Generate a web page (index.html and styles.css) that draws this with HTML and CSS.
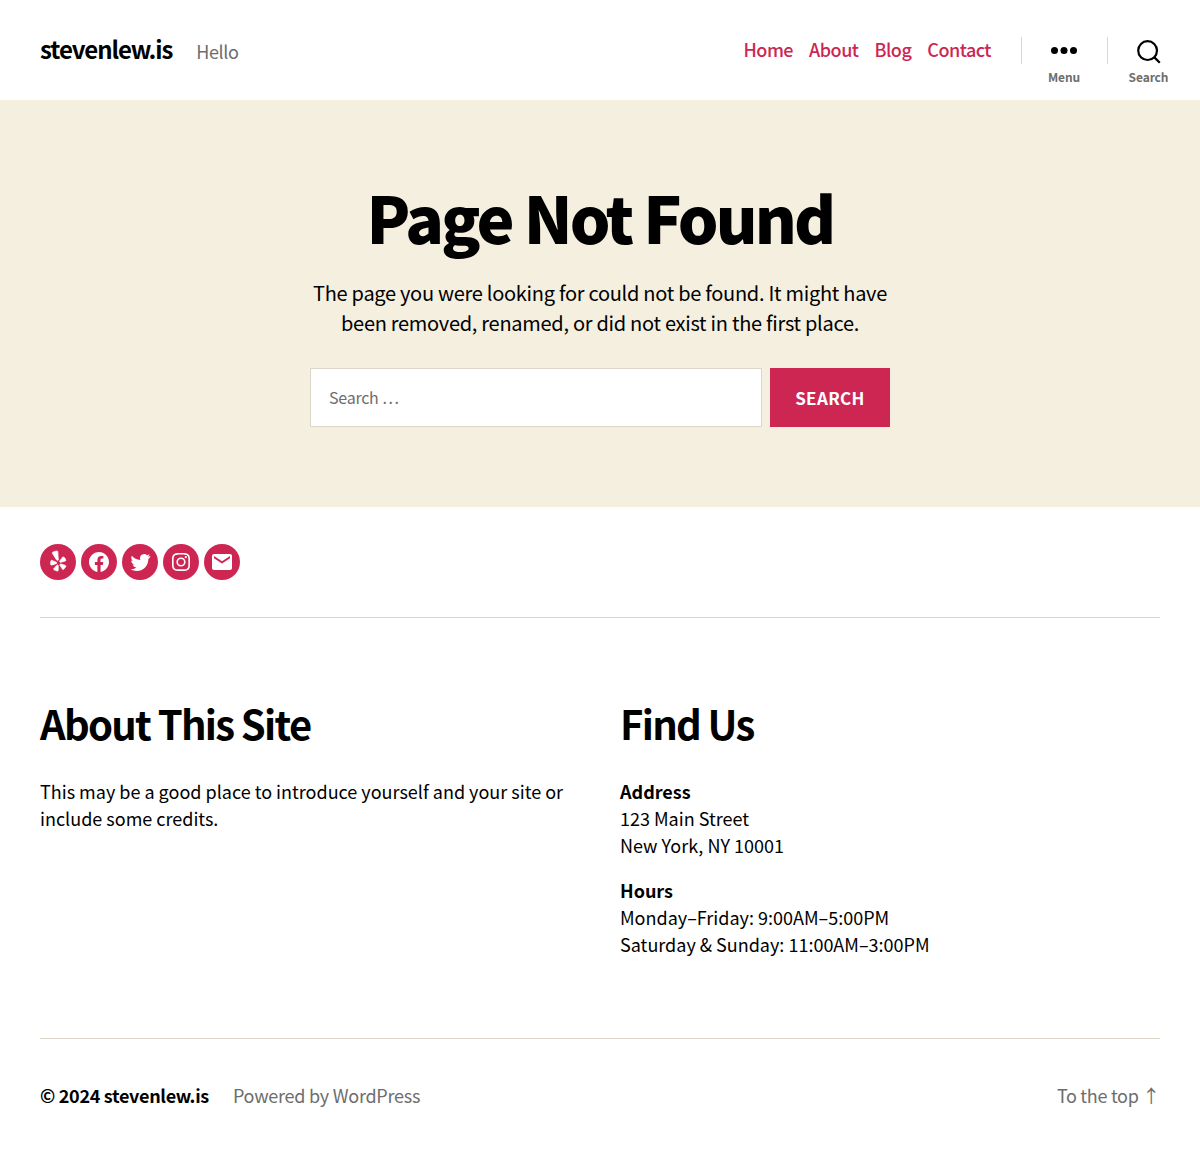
FILE: index.html
```html
<!DOCTYPE html>
<html>
<head>
<title>Page Not Found</title>
<link rel="stylesheet" href="styles.css">
</head>
<body>
<header class="site-header">
  <div class="branding">
    <div class="site-title">stevenlew.is</div>
    <div class="site-desc">Hello</div>
  </div>
  <div class="header-right">
    <nav class="main-nav">
      <a href="#">Home</a>
      <a href="#">About</a>
      <a href="#">Blog</a>
      <a href="#">Contact</a>
    </nav>
    <div class="toggle toggle-menu">
      <svg width="26" height="7" viewBox="0 0 26 7"><circle cx="3.5" cy="3.5" r="3.5"/><circle cx="13" cy="3.5" r="3.5"/><circle cx="22.5" cy="3.5" r="3.5"/></svg>
      <span>Menu</span>
    </div>
    <div class="toggle toggle-search">
      <svg width="24" height="24" viewBox="0 0 24 24"><circle cx="10.6" cy="10.6" r="9.4" fill="none" stroke="#000" stroke-width="2.2"/><path d="M17.4 17.4l5.4 5.4" stroke="#000" stroke-width="2.2" fill="none"/></svg>
      <span>Search</span>
    </div>
  </div>
</header>

<section class="hero">
  <h1>Page Not Found</h1>
  <p>The page you were looking for could not be found. It might have been removed, renamed, or did not exist in the first place.</p>
  <form class="search-form">
    <input type="text" placeholder="Search …">
    <button type="button">Search</button>
  </form>
</section>

<footer class="footer">
  <div class="social">
    <a href="#"><svg class="icon-yelp" viewBox="0 1 24 24" width="24" height="24"><path d="M12.271 16.718v1.417q-.011 3.257-.067 3.4a.707.707 0 0 1-.569.446 4.637 4.637 0 0 1-2.024-.424A4.609 4.609 0 0 1 7.8 20.565a.844.844 0 0 1-.19-.4.692.692 0 0 1 .044-.29 3.181 3.181 0 0 1 .379-.524q.335-.412 2.019-2.409.011 0 .669-.781a.757.757 0 0 1 .44-.274.965.965 0 0 1 .552.039.945.945 0 0 1 .418.324.732.732 0 0 1 .139.468zm-1.662-2.8a.783.783 0 0 1-.58.781l-1.339.435q-3.067.981-3.257.981a.711.711 0 0 1-.6-.4 2.636 2.636 0 0 1-.19-.836 9.134 9.134 0 0 1 .011-1.857 3.559 3.559 0 0 1 .335-1.389.659.659 0 0 1 .625-.357 22.629 22.629 0 0 1 2.253.859q.781.324 1.283.524l.937.379a.771.771 0 0 1 .4.34.982.982 0 0 1 .122.74zm9.213 3.313a4.467 4.467 0 0 1-1.021 1.8 4.559 4.559 0 0 1-1.512 1.417.671.671 0 0 1-.7-.078q-.156-.112-2.052-3.2l-.524-.859a.761.761 0 0 1-.128-.513.957.957 0 0 1 .217-.513.774.774 0 0 1 .926-.29q.011.011 1.327.446 2.264.736 2.7.887a2.082 2.082 0 0 1 .524.229.673.673 0 0 1 .243.674zm-7.5-7.049q.056 1.137-.6 1.361-.647.19-1.272-.792L6.237 4.08a.7.7 0 0 1 .212-.691 5.788 5.788 0 0 1 2.314-1 5.928 5.928 0 0 1 2.5-.352.681.681 0 0 1 .547.5q.034.2.245 3.407t.267 4.638zm7.384 1.2a.679.679 0 0 1-.29.658q-.167.112-3.67.959-.747.167-1.015.257l.011-.022a.769.769 0 0 1-.513-.044.914.914 0 0 1-.413-.357.786.786 0 0 1 0-.971q.011-.011.836-1.137 1.394-1.908 1.673-2.275a2.423 2.423 0 0 1 .379-.435.7.7 0 0 1 .737-.034 4.56 4.56 0 0 1 1.551 1.166 4.633 4.633 0 0 1 .714 2.235z"/></svg></a>
    <a href="#"><svg viewBox="0 0 24 24" width="24" height="24"><path d="M12 2C6.5 2 2 6.5 2 12c0 5 3.7 9.1 8.4 9.9v-7H7.9V12h2.5V9.8c0-2.5 1.5-3.9 3.8-3.9 1.1 0 2.2.2 2.2.2v2.5h-1.3c-1.2 0-1.6.8-1.6 1.6V12h2.8l-.4 2.9h-2.3v7C18.3 21.1 22 17 22 12c0-5.5-4.5-10-10-10z"/></svg></a>
    <a href="#"><svg viewBox="0 0 24 24" width="24" height="24"><path d="M22.23 5.92c-.73.33-1.51.55-2.33.65.84-.5 1.48-1.3 1.78-2.25-.78.47-1.65.8-2.58.99A4.07 4.07 0 0 0 12.17 9c0 .32.04.63.1.93-3.38-.17-6.38-1.79-8.39-4.25-.35.6-.55 1.3-.55 2.05 0 1.41.72 2.66 1.81 3.39-.67-.02-1.3-.2-1.84-.51v.05c0 1.97 1.4 3.62 3.26 3.99-.34.09-.7.14-1.07.14-.26 0-.52-.03-.77-.07.52 1.62 2.02 2.8 3.8 2.83a8.16 8.16 0 0 1-6.02 1.68 11.5 11.5 0 0 0 6.24 1.83c7.49 0 11.58-6.2 11.58-11.58l-.01-.53c.8-.57 1.48-1.29 2.02-2.1z"/></svg></a>
    <a href="#"><svg viewBox="0 0 24 24" width="24" height="24"><path d="M12 4.62c2.4 0 2.69.01 3.64.05.88.04 1.35.19 1.67.31.42.16.72.36 1.03.67.31.31.51.61.67 1.03.12.32.27.79.31 1.67.04.95.05 1.24.05 3.64s-.01 2.69-.05 3.64c-.04.88-.19 1.35-.31 1.67-.16.42-.36.72-.67 1.03-.31.31-.61.51-1.03.67-.32.12-.79.27-1.67.31-.95.04-1.24.05-3.64.05s-2.69-.01-3.64-.05c-.88-.04-1.35-.19-1.67-.31a2.8 2.8 0 0 1-1.03-.67 2.8 2.8 0 0 1-.67-1.03c-.12-.32-.27-.79-.31-1.67-.04-.95-.05-1.24-.05-3.64s.01-2.69.05-3.64c.04-.88.19-1.35.31-1.67.16-.42.36-.72.67-1.03.31-.31.61-.51 1.03-.67.32-.12.79-.27 1.67-.31.95-.04 1.24-.05 3.64-.05M12 3c-2.44 0-2.75.01-3.71.05-.96.05-1.61.2-2.18.42-.59.23-1.09.54-1.59 1.04-.5.5-.81 1-1.04 1.59-.22.57-.37 1.22-.42 2.18C3.01 9.25 3 9.56 3 12s.01 2.75.05 3.71c.05.96.2 1.61.42 2.18.23.59.54 1.09 1.04 1.59.5.5 1 .81 1.59 1.04.57.22 1.22.37 2.18.42.96.04 1.27.05 3.71.05s2.75-.01 3.71-.05c.96-.05 1.61-.2 2.18-.42a4.4 4.4 0 0 0 1.59-1.04c.5-.5.81-1 1.04-1.59.22-.57.37-1.22.42-2.18.04-.96.05-1.27.05-3.71s-.01-2.75-.05-3.71c-.05-.96-.2-1.61-.42-2.18a4.4 4.4 0 0 0-1.04-1.59c-.5-.5-1-.81-1.59-1.04-.57-.22-1.22-.37-2.18-.42C14.75 3.01 14.44 3 12 3zm0 4.38a4.62 4.62 0 1 0 0 9.24 4.62 4.62 0 0 0 0-9.24zM12 15a3 3 0 1 1 0-6 3 3 0 0 1 0 6zm4.8-8.88a1.08 1.08 0 1 0 0 2.16 1.08 1.08 0 0 0 0-2.16z"/></svg></a>
    <a href="#"><svg viewBox="0 0 24 24" width="24" height="24"><path d="M20 4H4c-1.1 0-2 .9-2 2v12c0 1.1.9 2 2 2h16c1.1 0 2-.9 2-2V6c0-1.1-.9-2-2-2zm0 4.2l-8 5.3-8-5.3V6l8 5.3L20 6v2.2z"/></svg></a>
  </div>

  <div class="widgets">
    <div class="widget">
      <h2>About This Site</h2>
      <p>This may be a good place to introduce yourself and your site or include some credits.</p>
    </div>
    <div class="widget">
      <h2>Find Us</h2>
      <p><strong>Address</strong><br>123 Main Street<br>New York, NY 10001</p>
      <p><strong>Hours</strong><br>Monday–Friday: 9:00AM–5:00PM<br>Saturday &amp; Sunday: 11:00AM–3:00PM</p>
    </div>
  </div>

  <div class="credits">
    <div class="credits-left">
      <span class="copyright">© 2024 stevenlew.is</span>
      <span class="powered">Powered by WordPress</span>
    </div>
    <a href="#" class="to-top">To the top <span class="arrow">↑</span></a>
  </div>
</footer>
</body>
</html>
```

FILE: styles.css
```css
* {
  box-sizing: border-box;
}

body {
  margin: 0;
  background-color: #fff;
  color: #000;
  font-family: "Noto Sans CJK SC", "Noto Sans", sans-serif;
}

a {
  text-decoration: none;
}

.site-header {
  height: 100px;
  display: flex;
  justify-content: space-between;
  padding: 0 10px 0 40px;
}

.branding {
  display: flex;
  align-items: center;
  gap: 24px;
  padding-bottom: 2px;
}

.site-title {
  font-size: 24px;
  font-weight: 700;
  letter-spacing: -1.05px;
  margin-bottom: 2px;
}

.site-desc {
  font-size: 18px;
  color: #6d6d6d;
  letter-spacing: -0.4px;
  padding-top: 4px;
}

.header-right {
  display: flex;
  align-items: center;
}

.main-nav {
  display: flex;
  gap: 16px;
  margin-right: 30px;
  margin-bottom: 2px;
}

.main-nav a {
  color: #cd2653;
  font-size: 18px;
  font-weight: 500;
  letter-spacing: -0.5px;
}

.toggle {
  width: 86px;
  height: 54px;
  margin-top: 16px;
  position: relative;
  display: flex;
  flex-direction: column;
  align-items: center;
  justify-content: flex-end;
  font-size: 12px;
  font-weight: 600;
  letter-spacing: -0.1px;
  color: #6d6d6d;
}

.toggle-search {
  width: 83px;
}

.toggle svg {
  position: absolute;
  top: 9px;
}

.toggle-menu svg {
  top: 16px;
}

.toggle::before {
  content: "";
  position: absolute;
  left: 0;
  top: 6px;
  height: 27px;
  border-left: 1px solid #dcd7ca;
}

.hero {
  background-color: #f5efe0;
  height: 407px;
  padding-top: 73px;
  display: flex;
  flex-direction: column;
  align-items: center;
}

.hero h1 {
  margin: 0;
  font-size: 64px;
  line-height: 86px;
  font-weight: 800;
  letter-spacing: -2.8px;
}

.hero p {
  margin: 19px 0 0;
  width: 580px;
  text-align: center;
  font-size: 20px;
  line-height: 30px;
  letter-spacing: -0.28px;
}

.search-form {
  display: flex;
  gap: 8px;
  margin-top: 30px;
  width: 580px;
}

.search-form input {
  flex: 1;
  height: 59px;
  border: 1px solid #dcd7ca;
  background-color: #fff;
  padding: 0 18px 2px;
  font-family: inherit;
  font-size: 16px;
  letter-spacing: -0.25px;
}

.search-form input::placeholder {
  color: #6d6d6d;
  opacity: 1;
}

.search-form button {
  width: 120px;
  height: 59px;
  border: none;
  padding: 0;
  background-color: #cd2653;
  color: #fff;
  font-family: inherit;
  font-size: 17px;
  font-weight: 600;
  letter-spacing: 0.35px;
  text-transform: uppercase;
}

.footer {
  padding: 37px 40px 0;
}

.social {
  display: flex;
  gap: 5px;
  padding-bottom: 37px;
  border-bottom: 1px solid #dcd7ca;
}

.social a {
  width: 36px;
  height: 36px;
  border-radius: 50%;
  background-color: #cd2653;
  display: flex;
  align-items: center;
  justify-content: center;
}

.social svg {
  fill: #fff;
}

.social .icon-yelp {
  stroke: #fff;
  stroke-width: 0.7;
}

.widgets {
  display: grid;
  grid-template-columns: 1fr 1fr;
  column-gap: 40px;
  padding: 76px 0 62px;
  border-bottom: 1px solid #dcd7ca;
}

.widget h2 {
  margin: 0 0 26px;
  font-size: 40px;
  line-height: 58px;
  font-weight: 700;
  letter-spacing: -1.7px;
}

.widget p {
  margin: 0 0 18px;
  font-size: 18px;
  line-height: 27px;
}

.widget strong {
  font-weight: 700;
}

.credits {
  display: flex;
  justify-content: space-between;
  align-items: center;
  padding-top: 41px;
  font-size: 18px;
  line-height: 30px;
}

.credits-left {
  display: flex;
  gap: 24px;
}

.copyright {
  font-weight: 700;
  letter-spacing: -0.3px;
}

.powered {
  color: #6d6d6d;
  letter-spacing: -0.25px;
}

.to-top {
  color: #6d6d6d;
  letter-spacing: -0.3px;
}
```
